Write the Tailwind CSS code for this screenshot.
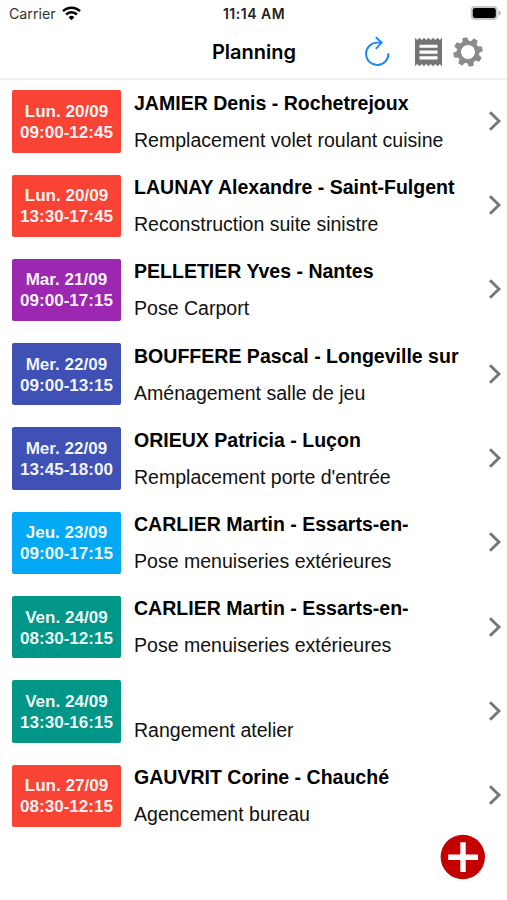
<!DOCTYPE html>
<html lang="fr">
<head>
<meta charset="utf-8">
<title>Planning</title>
<script src="https://cdn.jsdelivr.net/npm/@tailwindcss/browser@4"></script>
</head>
<body class="bg-white">
<svg width="0" height="0" class="hidden">
  <symbol id="chev" viewBox="0 0 14 22"><path d="M2 2.2 L11 11 L2 19.8" fill="none" stroke="#767676" stroke-width="2.9"/></symbol>
</svg>
<div class="relative flex h-[900px] w-[507px] flex-col overflow-hidden bg-white font-['Liberation_Sans',Arial,sans-serif] text-black">
  <div class="grid h-[28px] shrink-0 grid-cols-3 items-center font-[Inter,sans-serif] text-[14px] leading-none">
    <div class="flex items-center gap-[6px] pl-[9px] text-[#333]">
      <span class="text-[14.2px]">Carrier</span>
      <svg class="-mt-[1px]" width="19" height="15" viewBox="0 0 19 15" fill="none" stroke="#000" stroke-width="2.5"><path d="M1 5.2 A12 12 0 0 1 18 5.2"/><path d="M4.1 8.5 A7.6 7.6 0 0 1 14.9 8.5"/><path d="M9.5 14.2 L6.6 11.2 A4.2 4.2 0 0 1 12.4 11.2 Z" fill="#000" stroke="none"/></svg>
    </div>
    <div class="pl-[1px] text-center font-semibold text-[#222]"><span class="text-[14px] tracking-[0.5px]">11:14 AM</span></div>
    <div class="flex justify-end pr-[6px]">
      <svg class="-mt-[2px]" width="31" height="16" viewBox="0 0 31 16"><rect x="0.7" y="1" width="27" height="14" rx="4" fill="#c8c8c8"/><rect x="2.8" y="3" width="23" height="10" rx="2.2" fill="#000"/><path d="M28.7 5.2 Q30.8 6.2 30.8 8 Q30.8 9.8 28.7 10.8Z" fill="#aaa"/></svg>
    </div>
  </div>
  <header class="grid h-[52px] shrink-0 grid-cols-[1fr_auto_1fr] items-center border-b-2 border-[#efefef] pb-[2px]">
    <div></div>
    <h1 class="pl-[1px] font-[Inter,sans-serif] text-[20px] leading-none font-semibold">Planning</h1>
    <div class="flex items-center justify-end pr-[24px]">
      <svg class="mr-[25px]" width="26" height="32" viewBox="0 0 26 32" fill="none" stroke="#1b86f5" stroke-width="1.9"><path d="M17.4 6.6 H13.2 A11.2 11.2 0 1 0 24.4 17.2"/><path d="M11.8 1.2 L17.6 6.6 L11.8 12.8"/></svg>
      <svg class="mr-[11px]" width="27" height="30" viewBox="0 0 27 30"><path fill="#757575" d="M0 0.8 L2.25 3 L4.5 0.8 L6.75 3 L9 0.8 L11.25 3 L13.5 0.8 L15.75 3 L18 0.8 L20.25 3 L22.5 0.8 L24.75 3 L27 0.8 V29.2 L24.75 27 L22.5 29.2 L20.25 27 L18 29.2 L15.75 27 L13.5 29.2 L11.25 27 L9 29.2 L6.75 27 L4.5 29.2 L2.25 27 L0 29.2Z"/><path d="M4.5 9.3 H22.5 M4.5 15.1 H22.5 M4.5 20.9 H22.5" stroke="#fff" stroke-width="3.1"/></svg>
      <svg width="30" height="30" viewBox="-15 -15 30 30"><g transform="rotate(-13)" fill="#8b8b8b"><circle r="9.1" fill="none" stroke="#8b8b8b" stroke-width="4.2"/><path id="t" d="M-3.5 -10 L-2.3 -14.7 H2.3 L3.5 -10Z"/><use href="#t" transform="rotate(45)"/><use href="#t" transform="rotate(90)"/><use href="#t" transform="rotate(135)"/><use href="#t" transform="rotate(180)"/><use href="#t" transform="rotate(225)"/><use href="#t" transform="rotate(270)"/><use href="#t" transform="rotate(315)"/></g></svg>
    </div>
  </header>
  <main id="list" class="flex flex-col pt-[10.3px]"></main>
  <button class="absolute top-[834px] left-[440px] size-[46px]" aria-label="Ajouter">
    <svg width="46" height="46" viewBox="0 0 46 46"><circle cx="22.8" cy="23" r="22.2" fill="#c40000"/><path d="M8.2 23.2 H38 M23 8.3 V38" stroke="#fff" stroke-width="5.4"/></svg>
  </button>
</div>
<script>
const rows = [
  ['bg-[#f84335]', 'Lun. 20/09', '09:00-12:45', 'JAMIER Denis - Rochetrejoux', 'Remplacement volet roulant cuisine'],
  ['bg-[#f84335]', 'Lun. 20/09', '13:30-17:45', 'LAUNAY Alexandre - Saint-Fulgent', 'Reconstruction suite sinistre'],
  ['bg-[#9c27b0]', 'Mar. 21/09', '09:00-17:15', 'PELLETIER Yves - Nantes', 'Pose Carport'],
  ['bg-[#3f51b5]', 'Mer. 22/09', '09:00-13:15', 'BOUFFERE Pascal - Longeville sur', 'Aménagement salle de jeu'],
  ['bg-[#3f51b5]', 'Mer. 22/09', '13:45-18:00', 'ORIEUX Patricia - Luçon', "Remplacement porte d'entrée"],
  ['bg-[#03a9f4]', 'Jeu. 23/09', '09:00-17:15', 'CARLIER Martin - Essarts-en-', 'Pose menuiseries extérieures'],
  ['bg-[#009688]', 'Ven. 24/09', '08:30-12:15', 'CARLIER Martin - Essarts-en-', 'Pose menuiseries extérieures'],
  ['bg-[#009688]', 'Ven. 24/09', '13:30-16:15', '', 'Rangement atelier'],
  ['bg-[#f84335]', 'Lun. 27/09', '08:30-12:15', 'GAUVRIT Corine - Chauché', 'Agencement bureau'],
];
document.getElementById('list').innerHTML = rows.map(([bg, day, hours, name, task]) => `
  <article class="flex h-[84.3px] shrink-0 items-start pl-[12px] pr-[5px]">
    <div class="${bg} flex h-[62.3px] w-[109px] shrink-0 flex-col items-center rounded-[2px] pt-[10.5px] text-[17.1px] leading-[21px] font-bold whitespace-nowrap text-white/95">
      <span>${day}</span><span>${hours}</span>
    </div>
    <div class="ml-[13px] flex grow flex-col items-start whitespace-nowrap text-[19.55px] leading-[24px]">
      <h2 class="mt-[0.4px] h-[24px] font-bold">${name}</h2>
      <p class="mt-[13px] text-[#111]">${task}</p>
    </div>
    <svg class="mt-[19.5px] shrink-0" width="14" height="22"><use href="#chev"/></svg>
  </article>`).join('');
</script>
</body>
</html>
